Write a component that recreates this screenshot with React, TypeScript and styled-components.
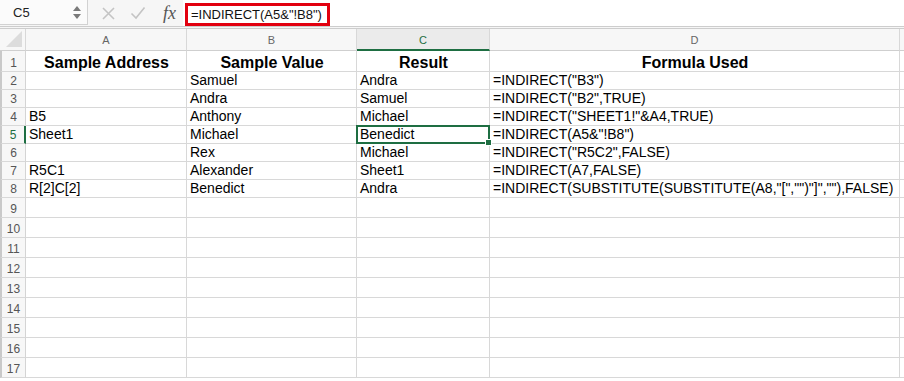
import React from "react";
import styled, { createGlobalStyle, css } from "styled-components";

const GlobalStyle = createGlobalStyle`
  html, body {
    margin: 0;
    padding: 0;
    background: #ffffff;
    overflow: hidden;
  }
  body {
    font-family: "Liberation Sans", Arial, sans-serif;
  }
`;

const Page = styled.div`
  width: 904px;
  height: 381px;
  overflow: hidden;
  background: #ffffff;
`;

const Toolbar = styled.div`
  display: flex;
  align-items: stretch;
  height: 29px;
  box-sizing: border-box;
  background: #f6f6f6;
  border-bottom: 3px double #cdcdcd;
`;

const NameBox = styled.div`
  width: 88px;
  height: 25px;
  box-sizing: border-box;
  display: flex;
  align-items: center;
  justify-content: space-between;
  padding: 0 6px 0 13px;
  background: #fbfbfb;
  border-right: 1px solid #d2d2d2;
  border-bottom: 1px solid #d2d2d2;
  font-size: 13px;
  color: #222;
`;

const Spinner = styled.div`
  display: flex;
  flex-direction: column;
  gap: 3px;
`;

const Arrow = styled.div<{ $down?: boolean }>`
  width: 0;
  height: 0;
  border-left: 4px solid transparent;
  border-right: 4px solid transparent;
  ${(p) =>
    p.$down
      ? css`border-top: 5px solid #7a7a7a;`
      : css`border-bottom: 5px solid #7a7a7a;`}
`;

const Actions = styled.div`
  display: flex;
  align-items: center;
  gap: 14px;
  padding-left: 13px;
  width: 95px;
  box-sizing: border-box;
`;

const Fx = styled.span`
  font-family: "Liberation Serif", "DejaVu Serif", serif;
  font-style: italic;
  font-size: 18px;
  color: #555;
  margin-left: 3px;
`;

const FormulaArea = styled.div`
  flex: 1;
  display: flex;
  align-items: flex-start;
  padding: 3px 0 0 2px;
  background: #ffffff;
`;

const FormulaBox = styled.div`
  height: 23px;
  box-sizing: border-box;
  border: 3px solid #e2000f;
  padding: 0 5px 0 3px;
  display: flex;
  align-items: center;
  font-size: 13px;
  color: #111;
`;

const Grid = styled.div`
  display: grid;
  grid-template-columns: 26px 161px 170px 133px 410px 4px;
  grid-template-rows: 22px 21px repeat(7, 18px) repeat(9, 20px);
`;

const HeadCell = styled.div<{ $active?: boolean; $corner?: boolean }>`
  box-sizing: border-box;
  background: ${(p) => (p.$active ? "#ebebeb" : "#f7f7f7")};
  border-right: 1px solid #d8d8d8;
  border-bottom: ${(p) => (p.$active ? "2px solid #1e6e42" : "1px solid #cfcfcf")};
  color: ${(p) => (p.$active ? "#1e6e42" : "#666")};
  font-size: 11px;
  display: flex;
  align-items: center;
  justify-content: center;
  padding-top: 1px;
  ${(p) =>
    p.$corner &&
    css`
      position: relative;
      &::after {
        content: "";
        position: absolute;
        right: 3px;
        bottom: 3px;
        border-left: 16px solid transparent;
        border-bottom: 16px solid #dcdcdc;
      }
    `}
`;

const RowHead = styled.div<{ $active?: boolean }>`
  box-sizing: border-box;
  background: #f7f7f7;
  border-left: 2px solid #c9c9c9;
  border-right: ${(p) => (p.$active ? "2px solid #1e6e42" : "1px solid #d4d4d4")};
  border-bottom: 1px solid #d8d8d8;
  color: ${(p) => (p.$active ? "#1e6e42" : "#555")};
  font-size: 12px;
  display: flex;
  align-items: flex-end;
  justify-content: center;
  padding-bottom: 1px;
`;

const Cell = styled.div<{ $bold?: boolean; $active?: boolean }>`
  box-sizing: border-box;
  position: relative;
  border-right: 1px solid #d8d8d8;
  border-bottom: 1px solid #d8d8d8;
  font-size: ${(p) => (p.$bold ? "16px" : "14px")};
  font-weight: ${(p) => (p.$bold ? 700 : 400)};
  color: #000;
  white-space: nowrap;
  overflow: visible;
  display: flex;
  align-items: flex-end;
  justify-content: ${(p) => (p.$bold ? "center" : "flex-start")};
  padding: 0 2px 0 3px;
  line-height: 17px;
  ${(p) =>
    p.$active &&
    css`
      &::after {
        content: "";
        position: absolute;
        left: -1px;
        top: -1px;
        right: -1px;
        bottom: -1px;
        border: 2px solid #1e6e42;
        z-index: 1;
      }
      &::before {
        content: "";
        position: absolute;
        right: -3px;
        bottom: -3px;
        width: 5px;
        height: 5px;
        background: #1e6e42;
        border: 1px solid #fff;
        z-index: 2;
      }
    `}
`;

const Edge = styled.div`
  border-bottom: 1px solid #d8d8d8;
  background: #fff;
`;

const HeadEdge = styled.div`
  background: #f7f7f7;
  border-bottom: 1px solid #cfcfcf;
`;

const columns = ["A", "B", "C", "D"];

const rows: string[][] = [
  ["Sample Address", "Sample Value", "Result", "Formula Used"],
  ["", "Samuel", "Andra", '=INDIRECT("B3")'],
  ["", "Andra", "Samuel", '=INDIRECT("B2",TRUE)'],
  ["B5", "Anthony", "Michael", '=INDIRECT("SHEET1!"&A4,TRUE)'],
  ["Sheet1", "Michael", "Benedict", '=INDIRECT(A5&"!B8")'],
  ["", "Rex", "Michael", '=INDIRECT("R5C2",FALSE)'],
  ["R5C1", "Alexander", "Sheet1", "=INDIRECT(A7,FALSE)"],
  ["R[2]C[2]", "Benedict", "Andra", '=INDIRECT(SUBSTITUTE(SUBSTITUTE(A8,"[","")"]",""),FALSE)'],
];

const TOTAL_ROWS = 17;

const Cross = () => (
  <svg width="15" height="15" viewBox="0 0 15 15">
    <path d="M2 2 L13 13 M13 2 L2 13" stroke="#c4c4c4" strokeWidth="1.6" fill="none" />
  </svg>
);

const Check = () => (
  <svg width="16" height="14" viewBox="0 0 16 14">
    <path d="M1.5 7.5 L6 12 L14.5 1.5" stroke="#c4c4c4" strokeWidth="1.6" fill="none" />
  </svg>
);

export default function App() {
  return (
    <Page>
      <GlobalStyle />
      <Toolbar>
        <NameBox>
          <span>C5</span>
          <Spinner>
            <Arrow />
            <Arrow $down />
          </Spinner>
        </NameBox>
        <Actions>
          <Cross />
          <Check />
          <Fx>fx</Fx>
        </Actions>
        <FormulaArea>
          <FormulaBox>=INDIRECT(A5&amp;"!B8")</FormulaBox>
        </FormulaArea>
      </Toolbar>
      <Grid>
        <HeadCell $corner />
        {columns.map((c) => (
          <HeadCell key={c} $active={c === "C"}>
            {c}
          </HeadCell>
        ))}
        <HeadEdge />
        {Array.from({ length: TOTAL_ROWS }, (_, i) => {
          const data = rows[i] || ["", "", "", ""];
          const rowNo = i + 1;
          return (
            <React.Fragment key={rowNo}>
              <RowHead $active={rowNo === 5}>{rowNo}</RowHead>
              {data.map((v, j) => (
                <Cell key={j} $bold={rowNo === 1} $active={rowNo === 5 && j === 2}>
                  {v}
                </Cell>
              ))}
              <Edge />
            </React.Fragment>
          );
        })}
      </Grid>
    </Page>
  );
}
